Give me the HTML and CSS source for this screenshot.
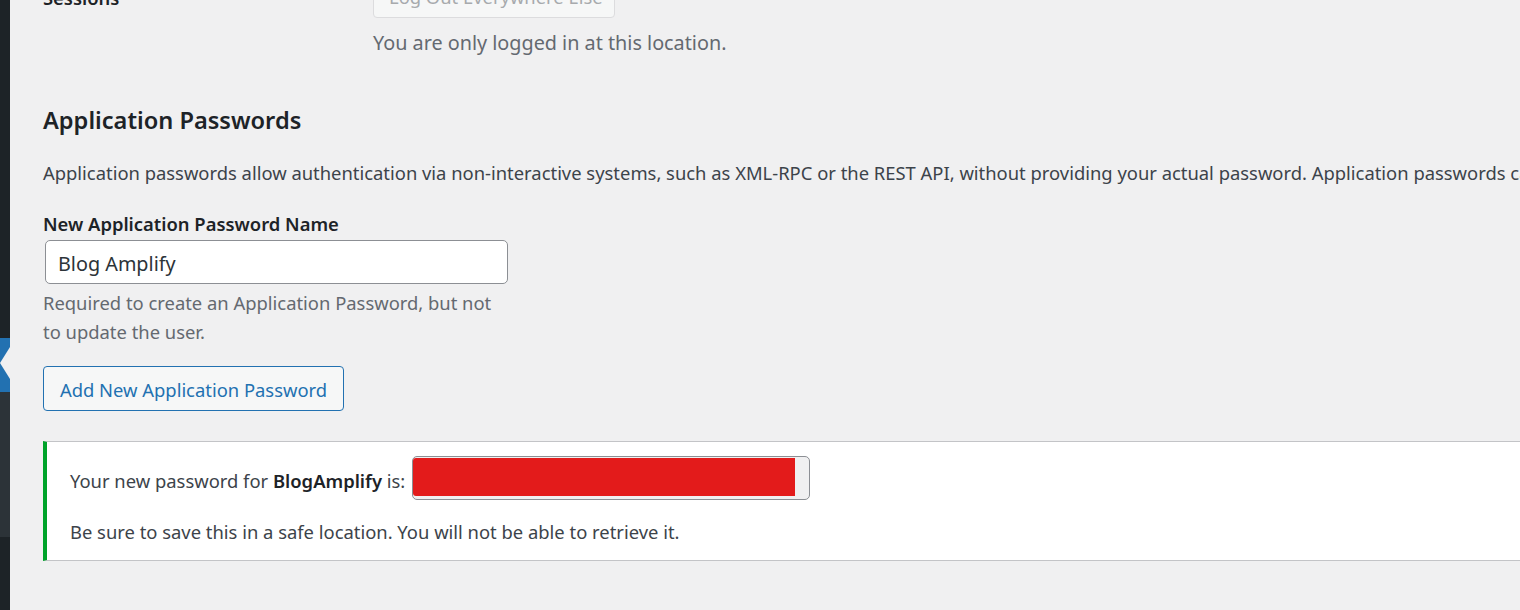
FILE: index.html
```html
<!DOCTYPE html>
<html lang="en">
<head>
<meta charset="utf-8">
<title>Application Passwords</title>
<link rel="stylesheet" href="styles.css">
</head>
<body>
<div class="layout">
  <aside class="sidebar">
    <div class="sb-top"></div>
    <div class="sb-current">
      <svg class="sb-arrow" width="10" height="54" viewBox="0 0 10 54"><polygon points="10,9 0,25 10,41" fill="#f0f0f1"/></svg>
    </div>
    <div class="sb-sub"></div>
    <div class="sb-bottom"></div>
  </aside>
  <main class="content">
    <div class="sessions-row">
      <div class="row-label">Sessions</div>
      <div class="row-field">
        <button class="btn btn-disabled" disabled>Log Out Everywhere Else</button>
        <p class="description session-desc">You are only logged in at this location.</p>
      </div>
    </div>

    <h2 class="section-title">Application Passwords</h2>
    <p class="intro">Application passwords allow authentication via non-interactive systems, such as XML-RPC or the REST API, without providing your actual password. Application passwords can be easily revoked. They cannot be used for traditional logins to your website.</p>

    <div class="new-pw">
      <label class="field-label" for="app-name">New Application Password Name</label>
      <input class="text-input" id="app-name" type="text" value="Blog Amplify">
      <p class="description field-desc">Required to create an Application Password, but not<br>to update the user.</p>
      <button class="btn btn-secondary">Add New Application Password</button>
    </div>

    <div class="notice">
      <p class="notice-line"><span class="notice-text">Your new password for <strong>BlogAmplify</strong> is: </span><span class="pw-box"><span class="pw-redact"></span></span></p>
      <p class="notice-line second">Be sure to save this in a safe location. You will not be able to retrieve it.</p>
    </div>
  </main>
</div>
</body>
</html>
```

FILE: styles.css
```css
* { box-sizing: border-box; }

html, body {
  margin: 0;
  padding: 0;
  height: 100%;
}

body {
  background: #f0f0f1;
  font-family: "Segoe UI", "Noto Sans", "Open Sans", sans-serif;
  font-size: 18.4px;
  line-height: 29px;
  color: #3c434a;
  overflow: hidden;
}

.layout {
  display: flex;
  height: 610px;
}

.sidebar {
  width: 10px;
  flex: 0 0 10px;
  display: flex;
  flex-direction: column;
}

.sb-top { height: 338px; background: #1d2327; }
.sb-current { height: 54px; background: #2271b1; }
.sb-arrow { display: block; }
.sb-sub { height: 145px; background: #2c3338; }
.sb-bottom { flex: 1; background: #1d2327; }

.content {
  flex: 1;
  min-width: 0;
  padding-left: 33px;
  overflow: hidden;
}

p { margin: 0; }

.sessions-row {
  display: grid;
  grid-template-columns: 330px 1fr;
  margin-top: -27px;
}

.row-label {
  font-weight: 600;
  color: #1d2327;
  padding-top: 10px;
}

.btn {
  font-family: inherit;
  font-size: 18.4px;
  height: 45px;
  padding: 2px 15px 0;
  border-radius: 4px;
  border: 1px solid;
  line-height: 41px;
  display: block;
  white-space: nowrap;
}

.btn-disabled {
  color: #a7aaad;
  border-color: #dcdcde;
  background: #f6f7f7;
  width: 242px;
}

.btn-secondary {
  color: #2271b1;
  border-color: #2271b1;
  background: #f6f7f7;
  width: 301px;
}

.description { color: #646970; }

.session-desc {
  margin-top: 10px;
  font-size: 19.8px;
}

.section-title {
  margin: 47px 0 0;
  font-size: 23.6px;
  line-height: 32px;
  font-weight: 600;
  color: #1d2327;
}

.intro {
  margin-top: 22px;
  white-space: nowrap;
}

.new-pw {
  margin-top: 22px;
}

.field-label {
  display: block;
  font-weight: 600;
  color: #1d2327;
}

.text-input {
  display: block;
  margin: 2px 0 0 2px;
  width: 463px;
  height: 44px;
  border: 1px solid #8c8f94;
  border-radius: 5px;
  background: #fff;
  font-family: inherit;
  font-size: 19.8px;
  color: #2c3338;
  padding: 3px 12px 0;
}

.field-desc { margin-top: 4px; }

.new-pw .btn-secondary { margin-top: 20px; }

.notice {
  margin-top: 30px;
  background: #fff;
  border-top: 1px solid #c3c4c7;
  border-bottom: 1px solid #c3c4c7;
  border-left: 4px solid #00a32a;
  padding: 14px 0 13px 23px;
  height: 120px;
}

.notice-line {
  display: flex;
  align-items: center;
  white-space: pre;
}

.notice-text {
  padding-top: 4px;
}

.notice-line strong {
  font-weight: 600;
  color: #1d2327;
}

.pw-box {
  display: inline-block;
  margin-left: 2px;
  width: 398px;
  height: 44px;
  border: 1px solid #8c8f94;
  border-radius: 5px;
  background: #f0f0f1;
  padding: 1px 14px 3px 0;
}

.pw-redact {
  display: block;
  height: 100%;
  background: #e31b1b;
  border-radius: 3px 0 0 3px;
}

.notice-line.second { margin-top: 17px; }
```
